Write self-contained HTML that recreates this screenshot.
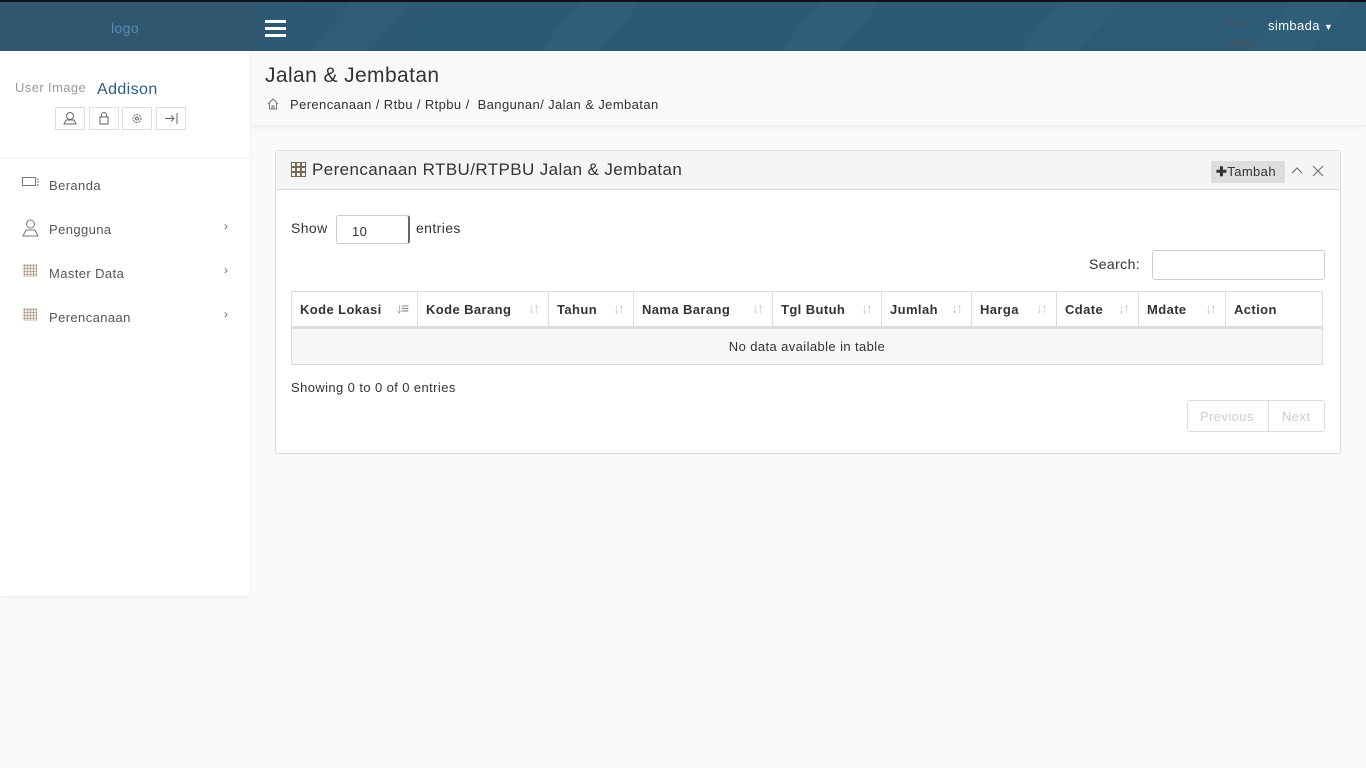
<!DOCTYPE html>
<html><head><meta charset="utf-8"><style>
*{box-sizing:border-box;margin:0;padding:0}
body{width:1366px;height:768px;background:#fafafa;font-family:"Liberation Sans",sans-serif;color:#333;position:relative;overflow:hidden;letter-spacing:.4px}
.top{position:absolute;left:0;top:0;width:1366px;height:51px;background:linear-gradient(100deg,#2f5770 0%,#2c5a74 40%,#2b5b75 100%);border-top:2px solid #111}
.logo{position:absolute;left:0;top:0;width:250px;height:51px;background:#305670;color:#5d8bb3;text-align:center;line-height:52px;font-size:14px}
.stripe{position:absolute;top:0;height:49px;width:60px;background:rgba(255,255,255,.025);transform:skewX(-40deg)}
.side{position:absolute;left:0;top:51px;width:250px;height:545px;background:#fff;box-shadow:0 1px 3px rgba(0,0,0,.06)}
.ub{position:absolute;top:109px;width:30px;height:23px;border:1px solid #ddd;background:#fff}
.mi{position:absolute;left:49px;font-size:13px;color:#555}
.chev{position:absolute;left:224px;font-size:12px;color:#666}
.grid{position:absolute;left:23px;width:14px;height:13px;background:radial-gradient(circle,#a08a70 1px,transparent 1.3px) 0 0/3px 3px}
.ph{position:absolute;left:251px;top:51px;width:1115px;height:74px;background:#f9f9f9;box-shadow:0 2px 4px rgba(0,0,0,.06)}
.panel{position:absolute;left:275px;top:150px;width:1066px;height:304px;background:#fff;border:1px solid #ddd;border-radius:3px}
.phd{height:39px;background:#f5f5f5;border-bottom:1px solid #ddd}
table{position:absolute;left:291px;top:291px;border-collapse:collapse;font-size:13px}
th{height:36px;border:1px solid #ddd;border-bottom:3px solid #ddd;text-align:left;padding-left:8px;font-weight:bold;position:relative}
th i{position:absolute;right:10px;top:8px;color:#ccc;font-style:normal;font-size:14px;font-weight:bold;letter-spacing:-2px}
td{height:37px;border:1px solid #ddd;background:#f7f7f7;text-align:center}
</style></head><body>
<div class="top">
<div class="stripe" style="left:330px"></div><div class="stripe" style="left:560px"></div><div class="stripe" style="left:800px"></div><div class="stripe" style="left:1040px"></div><div class="stripe" style="left:1270px"></div>
<div class="logo">logo</div>
<div style="position:absolute;left:265px;top:18px;width:21px;height:3px;background:#fff;box-shadow:0 7px 0 #fff,0 14px 0 #fff"></div>
<div style="position:absolute;left:1224px;top:10px;font-size:12px;line-height:20px;color:#555;opacity:.7;width:40px">User Image</div>
<div style="position:absolute;left:1268px;top:16px;color:#fff;font-size:13px">simbada <span style="font-size:9px">▼</span></div>
</div>
<div class="side">
<div style="position:absolute;left:15px;top:29px;font-size:13px;color:#999">User Image</div>
<div style="position:absolute;left:97px;top:30px;font-size:16px;color:#2a5d83">Addison</div>
<div class="ub" style="left:55px;top:56px"><svg width="28" height="21"><circle cx="14" cy="8" r="3.5" fill="none" stroke="#666"/><path d="M8 16h12l-2-4h-8z" fill="none" stroke="#666"/></svg></div>
<div class="ub" style="left:89px;top:56px"><svg width="28" height="21"><rect x="10" y="9" width="8" height="7" fill="none" stroke="#666"/><path d="M11.5 9V7a2.5 2.5 0 015 0v2" fill="none" stroke="#666"/></svg></div>
<div class="ub" style="left:122px;top:56px"><svg width="28" height="21"><circle cx="14" cy="10.5" r="4" fill="none" stroke="#666" stroke-dasharray="2 1"/><circle cx="14" cy="10.5" r="1.5" fill="none" stroke="#666"/></svg></div>
<div class="ub" style="left:156px;top:56px"><svg width="28" height="21"><path d="M8 10.5h9M14 7.5l3 3-3 3M20 5v11" fill="none" stroke="#666"/></svg></div>
<div style="position:absolute;left:0;top:106px;width:250px;border-top:1px solid #eee"></div>
<svg style="position:absolute;left:22px;top:126px" width="18" height="10"><rect x=".5" y=".5" width="13" height="8" fill="none" stroke="#777"/><path d="M15 2h2M15 5h2M15 8h2" stroke="#777"/></svg>
<div class="mi" style="top:127px">Beranda</div>
<svg style="position:absolute;left:22px;top:168px" width="17" height="18"><circle cx="8.5" cy="5" r="4" fill="none" stroke="#777"/><path d="M1 17h15l-3-6H4z" fill="none" stroke="#777"/></svg>
<div class="mi" style="top:171px">Pengguna</div><div class="chev" style="top:168px">›</div>
<div class="grid" style="top:213px"></div>
<div class="mi" style="top:215px">Master Data</div><div class="chev" style="top:212px">›</div>
<div class="grid" style="top:257px"></div>
<div class="mi" style="top:259px">Perencanaan</div><div class="chev" style="top:256px">›</div>
</div>
<div class="ph">
<div style="position:absolute;left:14px;top:13px;font-size:21px;color:#333">Jalan &amp; Jembatan</div>
<svg style="position:absolute;left:16px;top:47px" width="12" height="12"><path d="M1 6L6 1l5 5M2.5 5v6h7V5M5 11V8h2v3" fill="none" stroke="#777"/></svg>
<div style="position:absolute;left:39px;top:46px;font-size:13px">Perencanaan / Rtbu / Rtpbu / &nbsp;Bangunan/ Jalan &amp; Jembatan</div>
</div>
<div class="panel"><div class="phd">
<svg style="position:absolute;left:15px;top:11px" width="16" height="16"><g fill="none" stroke="#7a6a55"><rect x=".5" y=".5" width="4" height="4"/><rect x="5.5" y=".5" width="4" height="4"/><rect x="10.5" y=".5" width="4" height="4"/><rect x=".5" y="5.5" width="4" height="4"/><rect x="5.5" y="5.5" width="4" height="4"/><rect x="10.5" y="5.5" width="4" height="4"/><rect x=".5" y="10.5" width="4" height="4"/><rect x="5.5" y="10.5" width="4" height="4"/><rect x="10.5" y="10.5" width="4" height="4"/></g></svg>
<div style="position:absolute;left:36px;top:9px;font-size:17px;color:#333">Perencanaan RTBU/RTPBU Jalan &amp; Jembatan</div>
<div style="position:absolute;left:935px;top:10px;width:74px;height:22px;background:#ddd;border-radius:2px;font-size:13px;line-height:22px;padding-left:5px"><b>✚</b>Tambah</div>
<svg style="position:absolute;left:1015px;top:15px" width="12" height="8"><path d="M1 7l5-5 5 5" fill="none" stroke="#666"/></svg>
<svg style="position:absolute;left:1036px;top:14px" width="12" height="12"><path d="M1 1l10 10M11 1L1 11" stroke="#666"/></svg>
</div></div>
<div style="position:absolute;left:291px;top:220px;font-size:14px">Show</div>
<div style="position:absolute;left:336px;top:215px;width:74px;height:29px;border:1px solid #ccc;border-right:2px solid #666;border-radius:3px;font-size:13px;padding:8px 0 0 15px">10</div>
<div style="position:absolute;left:416px;top:220px;font-size:14px">entries</div>
<div style="position:absolute;left:1089px;top:256px;font-size:14px">Search:</div>
<div style="position:absolute;left:1152px;top:250px;width:173px;height:30px;border:1px solid #ccc;border-radius:3px"></div>
<table><tr>
<th style="width:126px">Kode Lokasi<i style="color:#888">↓≡</i></th><th style="width:131px">Kode Barang<i>↓↑</i></th><th style="width:85px">Tahun<i>↓↑</i></th><th style="width:139px">Nama Barang<i>↓↑</i></th><th style="width:109px">Tgl Butuh<i>↓↑</i></th><th style="width:90px">Jumlah<i>↓↑</i></th><th style="width:85px">Harga<i>↓↑</i></th><th style="width:82px">Cdate<i>↓↑</i></th><th style="width:87px">Mdate<i>↓↑</i></th><th style="width:97px">Action</th>
</tr><tr><td colspan="10">No data available in table</td></tr></table>
<div style="position:absolute;left:291px;top:380px;font-size:13px">Showing 0 to 0 of 0 entries</div>
<div style="position:absolute;left:1187px;top:400px;width:138px;height:32px;border:1px solid #ddd;border-radius:3px;font-size:13px;color:#ccc">
<span style="position:absolute;left:12px;top:8px">Previous</span><span style="position:absolute;left:80px;top:0;height:30px;border-left:1px solid #ddd"></span><span style="position:absolute;left:94px;top:8px">Next</span></div>
</body></html>
